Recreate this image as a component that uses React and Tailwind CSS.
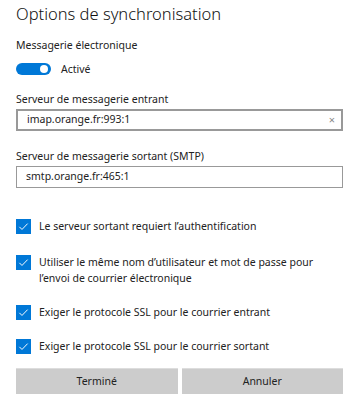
import { useState } from "react";

function Check({ children }) {
  return (
    <div className="flex items-start gap-2">
      <span className="mt-[1px] flex h-[15px] w-[15px] shrink-0 items-center justify-center bg-[#0078d7]">
        <svg viewBox="0 0 16 16" className="h-[11px] w-[11px]" fill="none" stroke="white" strokeWidth="1.4">
          <path d="M2 8.5l3.8 3.8L14 3.8" />
        </svg>
      </span>
      <span className="text-[10.5px] leading-[16px] text-[#222]">{children}</span>
    </div>
  );
}

export default function App() {
  const [enabled, setEnabled] = useState(true);

  return (
    <div
      className="h-[400px] w-[355px] overflow-hidden bg-white pl-4 pr-3 pt-[3px]"
      style={{ fontFamily: '"Segoe UI", "Noto Sans", sans-serif' }}
    >
      <h1 className="text-[16.5px] font-light leading-[22px] text-[#111]">
        Options de synchronisation
      </h1>

      {/* Messagerie */}
      <p className="mt-[12px] text-[10.5px] leading-[16px] text-[#222]">
        Messagerie électronique
      </p>
      <div className="mt-[8px] flex items-center gap-[10px]">
        <button
          onClick={() => setEnabled(!enabled)}
          className="flex h-[12px] w-[35px] items-center justify-end rounded-full bg-[#0078d7] pr-[3px]"
        >
          <span className="h-[8px] w-[8px] rounded-full bg-white" />
        </button>
        <span className="text-[10.5px] leading-[16px] text-[#222]">Activé</span>
      </div>

      {/* Serveurs */}
      <p className="mt-[14px] text-[10.5px] leading-[16px] text-[#222]">
        Serveur de messagerie entrant
      </p>
      <div className="mt-[2px] flex h-[22px] items-center justify-between border-2 border-[#999] pl-[9px] pr-[6px]">
        <span className="text-[10.5px] text-[#222]">imap.orange.fr:993:1</span>
        <span className="text-[11px] text-[#888]">×</span>
      </div>

      <p className="mt-[17px] text-[10.5px] leading-[16px] text-[#222]">
        Serveur de messagerie sortant (SMTP)
      </p>
      <div className="mt-[2px] flex h-[22px] items-center border border-[#999] pl-[9px]">
        <span className="text-[10.5px] text-[#222]">smtp.orange.fr:465:1</span>
      </div>

      {/* Options */}
      <div className="mt-[30px] flex flex-col gap-[18px]">
        <Check>Le serveur sortant requiert l’authentification</Check>
        <div className="mt-[2px]">
          <Check>
            Utiliser le même nom d’utilisateur et mot de passe pour
            <br />
            l’envoi de courrier électronique
          </Check>
        </div>
        <Check>Exiger le protocole SSL pour le courrier entrant</Check>
        <Check>Exiger le protocole SSL pour le courrier sortant</Check>
      </div>

      <div className="mt-[14px] flex gap-[4px]">
        <button className="h-[26px] flex-1 border-t border-[#ddd] bg-[#ccc] text-[10.5px] text-[#222]">
          Terminé
        </button>
        <button className="h-[26px] flex-1 border-t border-[#ddd] bg-[#ccc] text-[10.5px] text-[#222]">
          Annuler
        </button>
      </div>
    </div>
  );
}
